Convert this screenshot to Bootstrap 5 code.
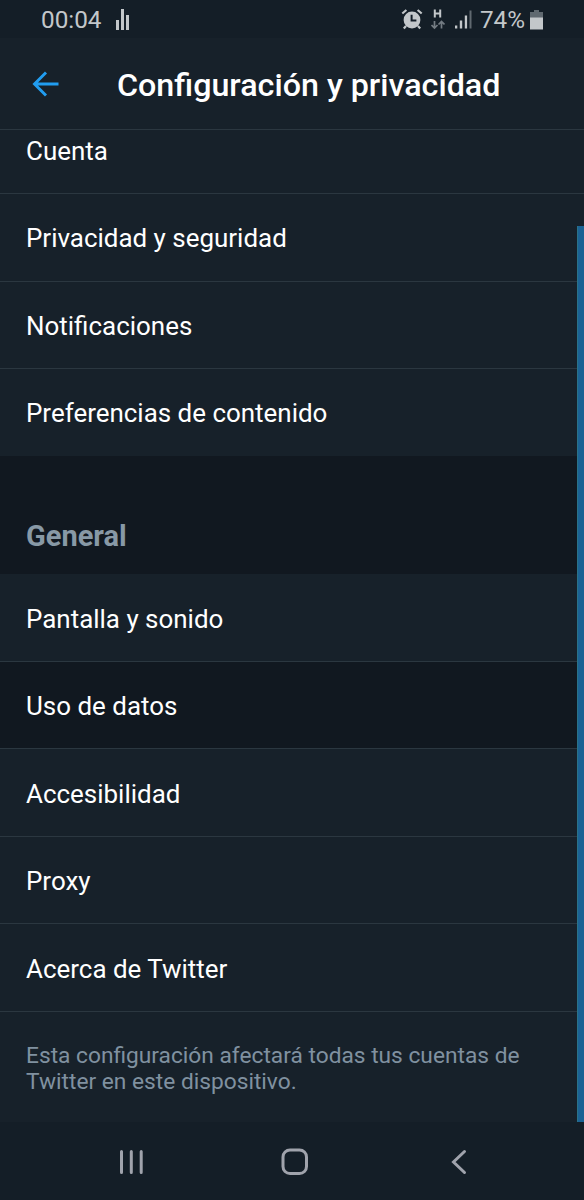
<!DOCTYPE html>
<html lang="es">
<head>
<meta charset="utf-8">
<meta name="viewport" content="width=device-width, initial-scale=1">
<title>Configuración y privacidad</title>
<link href="https://cdn.jsdelivr.net/npm/bootstrap@5.3.0/dist/css/bootstrap.min.css" rel="stylesheet">
<style>
body{font-family:Roboto,sans-serif;background:#17212a;color:#fff;width:584px;height:1200px}
svg{display:block;flex:none}
.status{height:38px;background:#141e27;color:#c3c7ca;font-size:24.3px;line-height:38px;padding:2px 41px 0 41px}
.topbar{height:92px;border-bottom:1px solid #2b3740;padding:0 32px}
.topbar h1{font-size:32.25px;font-weight:500;line-height:38px;margin:2px 0 0 58px}
.settings{height:992px}
.opts .opt{height:87.5px;padding:2px 26px 0;font-size:25.95px;line-height:30px;border:0;border-bottom:1px solid #2b3740;background:#17212a;color:#fff}
.opts .opt.cut{height:64px;padding:0 26px 27.5px}
.opts .opt.pressed{background:#111820}
.opts .opt.end{border-bottom-color:#17212a;height:87px;padding-top:1px}
.opts .opt.closing{border-bottom:1px solid #2b3740}
.general .opt{height:87.6px;padding-top:2.6px}
.section-title{height:118px;background:#111820;color:#8899a6;font-size:29px;line-height:34px;padding:0 26px 21px}
.note{color:#8091a0;font-size:22.72px;line-height:26.4px;padding:31px 26px 0}
.thumb{width:7px;top:96px;bottom:0;right:0;background:#1b6294;border-left:1px solid #2a7288}
.navkeys{height:78px;background:#141e27;padding:2px 117px 0 119px}
.home-key{margin-left:-6px}
.bars-icon{margin-left:14px}
.net-icon{margin-left:8px}
.signal-icon{margin:0 8px 0 10px}
.battery-icon{margin-left:5px}
</style>
</head>
<body class="d-flex flex-column overflow-hidden">
<div class="status d-flex align-items-center">
  <span>00:04</span>
  <svg class="bars-icon" width="13" height="22" viewBox="0 0 13 22" fill="#c3c7ca"><path d="M0 11h3v10H0zM5 0h3v21H5zM10 6h3v15h-3z"/></svg>
  <svg class="ms-auto" width="22" height="22" viewBox="0 0 22 22"><circle cx="11" cy="11" r="8.4" fill="#c3c7ca"/><path d="M1.3 4.5 5.4 1M20.7 4.5 16.6 1M5 17 2.8 19.5M17 17l2.2 2.5" stroke="#c3c7ca" stroke-width="2.2" fill="none"/><path d="M10.6 5.8v5.8h4.8" stroke="#141e28" stroke-width="2" fill="none"/></svg>
  <svg class="net-icon" width="14" height="22" viewBox="0 0 14 22" fill="none"><path d="M3.8 .5v8M9.2 .5v8M3.8 4.5h5.4" stroke="#c3c7ca" stroke-width="2"/><path d="M3.5 12v7M.5 16l3 3 3-3M10.5 19.5v-7M7.5 15.5l3-3 3 3" stroke="#747c83" stroke-width="1.7"/></svg>
  <svg class="signal-icon" width="17" height="20" viewBox="0 0 17 20" fill="#c3c7ca"><path d="M0 15.5h2.3v3H0zM4.8 10.500h2.4v8H4.8zM9.8 5.500h2.3v13H9.8z"/><path d="M14.5 .5h2v18h-2z" fill="#606970"/></svg>
  <span>74%</span>
  <svg class="battery-icon" width="13" height="21" viewBox="0 0 13 21"><path d="M4 0h5v2h4v6H0V2h4z" fill="#606970"/><path d="M0 7.500h13V19.500H0z" fill="#c3c7ca"/></svg>
</div>
<header class="topbar d-flex align-items-center">
  <svg width="27" height="26" viewBox="0 0 27 26" fill="none" stroke="#219df0" stroke-width="2.9"><path d="M26.5 13H3M14 1.5 2.500 13 14 24.5"/></svg>
  <h1>Configuración y privacidad</h1>
</header>
<main class="settings position-relative overflow-hidden">
  <div class="list-group list-group-flush opts">
    <a class="list-group-item opt cut d-flex align-items-end">Cuenta</a>
    <a class="list-group-item opt d-flex align-items-center">Privacidad y seguridad</a>
    <a class="list-group-item opt d-flex align-items-center">Notificaciones</a>
    <a class="list-group-item opt end d-flex align-items-center">Preferencias de contenido</a>
  </div>
  <h2 class="section-title d-flex align-items-end fw-bold mb-0">General</h2>
  <div class="list-group list-group-flush opts general">
    <a class="list-group-item opt d-flex align-items-center">Pantalla y sonido</a>
    <a class="list-group-item opt pressed d-flex align-items-center">Uso de datos</a>
    <a class="list-group-item opt d-flex align-items-center">Accesibilidad</a>
    <a class="list-group-item opt d-flex align-items-center">Proxy</a>
    <a class="list-group-item opt closing d-flex align-items-center">Acerca de Twitter</a>
  </div>
  <p class="note mb-0">Esta configuración afectará todas tus cuentas de<br>Twitter en este dispositivo.</p>
  <div class="thumb position-absolute"></div>
</main>
<nav class="navkeys d-flex align-items-center justify-content-between">
  <svg width="25" height="26" viewBox="0 0 25 26" stroke="#a0a3ac" stroke-width="3" stroke-linecap="round"><path d="M2.500 2.500v21M12.300 2.500v21M22.200 2.500v21"/></svg>
  <svg class="home-key" width="28" height="28" viewBox="0 0 28 28" fill="none" stroke="#a0a3ac" stroke-width="3"><rect x="2" y="2" width="23.5" height="23.5" rx="7"/></svg>
  <svg width="16" height="26" viewBox="0 0 16 26" fill="none" stroke="#a0a3ac" stroke-width="3" stroke-linecap="round"><path d="M13.500 2.500 2.500 13l11 10.500"/></svg>
</nav>
<script src="https://cdn.jsdelivr.net/npm/bootstrap@5.3.0/dist/js/bootstrap.bundle.min.js"></script>
</body>
</html>
